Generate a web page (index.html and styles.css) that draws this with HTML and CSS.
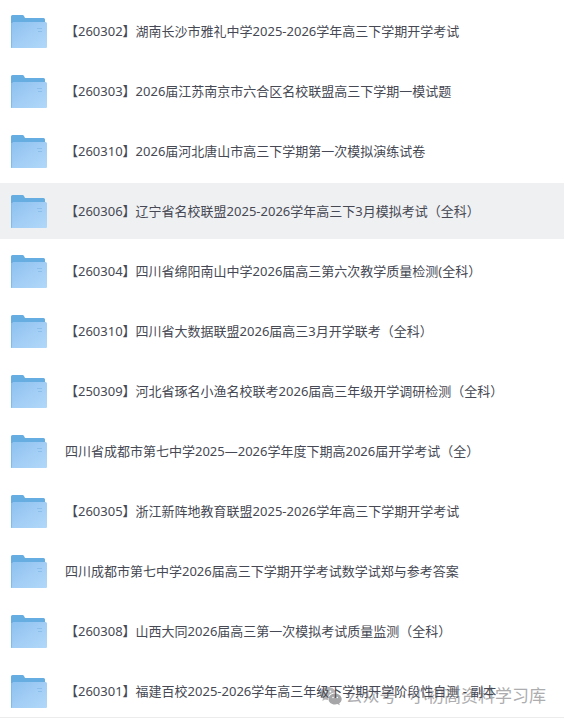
FILE: index.html
```html
<!DOCTYPE html>
<html lang="zh-CN">
<head>
    <meta charset="UTF-8">
    <meta name="viewport" content="width=device-width, initial-scale=1.0">
    <title>文件列表</title>
    <link rel="stylesheet" href="styles.css">
</head>
<body>
    <!-- Folder icon, shared by every row -->
    <svg class="sprite" width="0" height="0" aria-hidden="true">
        <defs>
            <linearGradient id="folderFront" x1="0" y1="0" x2="1" y2="1">
                <stop offset="0" stop-color="#8cc1f0"/>
                <stop offset="0.5" stop-color="#a2cdf5"/>
                <stop offset="1" stop-color="#b0d8f9"/>
            </linearGradient>
            <symbol id="folder" viewBox="0 0 37 33">
                <path fill="#66ade2" d="M1.500 0H11.500Q12.500 0 13 1L14 3H32.500Q34 3 34 4.500V20H1V32.500H0V1.500Q0 0 1.500 0Z"/>
                <path fill="#7fbcec" d="M0 8H2V33H1Q0 33 0 32Z"/>
                <path fill="url(#folderFront)" d="M2.500 7H34.500Q36 7 36 8.500V32Q36 33 35 33H1V8.500Q1 7 2.500 7Z"/>
                <path fill="none" stroke="#82b8e6" stroke-width="0.700" d="M26 13.500H31M27 16.500H31"/>
            </symbol>
        </defs>
    </svg>

    <ul class="file-list">
        <li class="file-row">
            <svg class="file-icon"><use href="#folder"/></svg>
            <a class="file-name" href="#">【260302】湖南长沙市雅礼中学2025-2026学年高三下学期开学考试</a>
        </li>
        <li class="file-row">
            <svg class="file-icon"><use href="#folder"/></svg>
            <a class="file-name" href="#">【260303】2026届江苏南京市六合区名校联盟高三下学期一模试题</a>
        </li>
        <li class="file-row">
            <svg class="file-icon"><use href="#folder"/></svg>
            <a class="file-name" href="#">【260310】2026届河北唐山市高三下学期第一次模拟演练试卷</a>
        </li>
        <li class="file-row active">
            <svg class="file-icon"><use href="#folder"/></svg>
            <a class="file-name" href="#">【260306】辽宁省名校联盟2025-2026学年高三下3月模拟考试（全科）</a>
        </li>
        <li class="file-row">
            <svg class="file-icon"><use href="#folder"/></svg>
            <a class="file-name" href="#">【260304】四川省绵阳南山中学2026届高三第六次教学质量检测(全科）</a>
        </li>
        <li class="file-row">
            <svg class="file-icon"><use href="#folder"/></svg>
            <a class="file-name" href="#">【260310】四川省大数据联盟2026届高三3月开学联考（全科）</a>
        </li>
        <li class="file-row">
            <svg class="file-icon"><use href="#folder"/></svg>
            <a class="file-name" href="#">【250309】河北省琢名小渔名校联考2026届高三年级开学调研检测（全科）</a>
        </li>
        <li class="file-row">
            <svg class="file-icon"><use href="#folder"/></svg>
            <a class="file-name" href="#">四川省成都市第七中学2025—2026学年度下期高2026届开学考试（全）</a>
        </li>
        <li class="file-row">
            <svg class="file-icon"><use href="#folder"/></svg>
            <a class="file-name" href="#">【260305】浙江新阵地教育联盟2025-2026学年高三下学期开学考试</a>
        </li>
        <li class="file-row">
            <svg class="file-icon"><use href="#folder"/></svg>
            <a class="file-name" href="#">四川成都市第七中学2026届高三下学期开学考试数学试郑与参考答案</a>
        </li>
        <li class="file-row">
            <svg class="file-icon"><use href="#folder"/></svg>
            <a class="file-name" href="#">【260308】山西大同2026届高三第一次模拟考试质量监测（全科）</a>
        </li>
        <li class="file-row">
            <svg class="file-icon"><use href="#folder"/></svg>
            <a class="file-name" href="#">【260301】福建百校2025-2026学年高三年级下学期开学阶段性自测 - 副本</a>
            <div class="watermark">
                <svg class="watermark-icon" viewBox="0 0 22 20" aria-hidden="true">
                    <path fill="#b4b4b6" d="M8 1C3.600 1 0 3.900 0 7.500C0 9.600 1.200 11.400 3 12.600L2.300 15L5 13.600C6 13.900 7 14 8 14C7.200 9.600 10.800 6.500 15.800 6.500C15.200 3.400 12 1 8 1Z"/>
                    <path fill="#a6a6a9" d="M15 7.500C11.200 7.500 8.500 10 8.500 13C8.500 16 11.200 18.500 15 18.500C15.900 18.500 16.700 18.400 17.500 18.100L19.800 19.300L19.200 17.300C20.800 16.300 21.700 14.700 21.700 13C21.700 10 18.800 7.500 15 7.500Z"/>
                    <g fill="#fff">
                        <circle cx="5.400" cy="5.500" r="0.900"/>
                        <circle cx="10.400" cy="5.500" r="0.900"/>
                        <circle cx="13" cy="11.500" r="0.800"/>
                        <circle cx="17.200" cy="11.500" r="0.800"/>
                    </g>
                </svg>
                <span>公众号 · 小初高资料学习库</span>
            </div>
        </li>
    </ul>
</body>
</html>
```

FILE: styles.css
```css
body {
    margin: 0;
    background-color: #fff;
    font-family: "Noto Sans", "Noto Sans CJK SC", sans-serif;
    font-size: 13px;
    color: #464953;
}
.sprite {
    display: block;
}
.file-list {
    display: flex;
    flex-direction: column;
    gap: 4px;
    margin: 0;
    padding: 3px 0 0;
    list-style: none;
}
.file-row {
    position: relative;
    display: flex;
    align-items: center;
    gap: 17px;
    padding: 12px 11px 11px;
}
.file-row.active {
    background-color: #eff0f2;
}
.file-row:last-child {
    padding-bottom: 9px;
    border-bottom: 1px solid #ececec;
}
.file-icon {
    flex: none;
    width: 37px;
    height: 33px;
}
.file-name {
    position: relative;
    z-index: 1;
    padding-bottom: 2px;
    line-height: 20px;
    color: inherit;
    text-decoration: none;
    white-space: nowrap;
}
.watermark {
    position: absolute;
    right: 18px;
    bottom: 9px;
    display: flex;
    align-items: center;
    gap: 4px;
    font-size: 17px;
    line-height: 24px;
    color: #adadaf;
    white-space: nowrap;
}
.watermark-icon {
    width: 22px;
    height: 20px;
}
```
